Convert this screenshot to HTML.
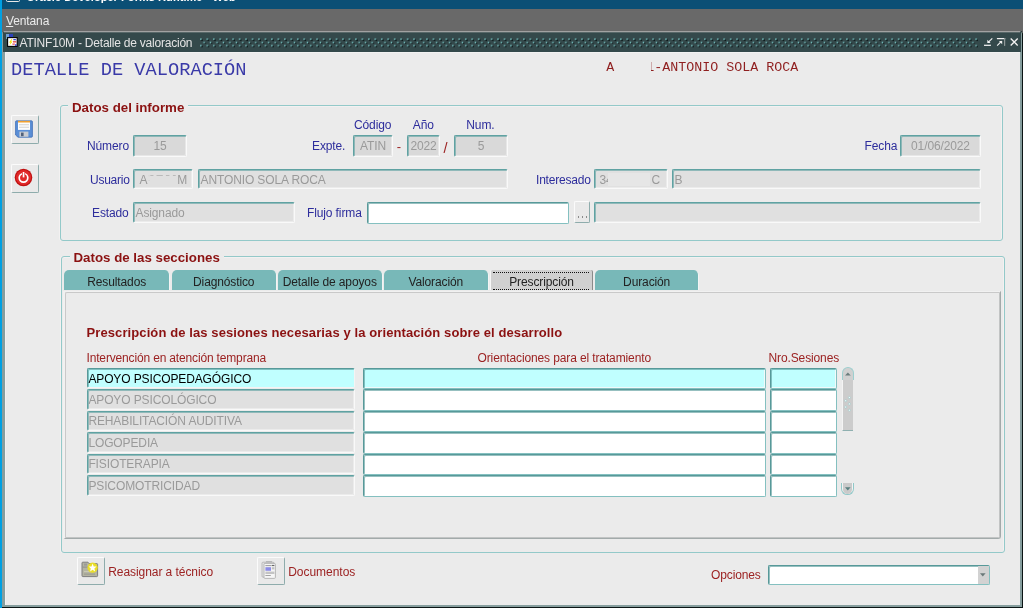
<!DOCTYPE html>
<html><head><meta charset="utf-8">
<style>
*{margin:0;padding:0;box-sizing:border-box}
html,body{width:1023px;height:608px;overflow:hidden;background:#ebebeb}
body{font-family:"Liberation Sans",sans-serif;font-size:12px;position:relative;letter-spacing:-0.12px}
.a{position:absolute;white-space:nowrap}
.f{position:absolute;border:1px solid;border-color:#5fa2a2 #f9f9f9 #f9f9f9 #5fa2a2;border-radius:2px;background:#d9d9d9;color:#9a9a9a;font-size:12px;line-height:20.4px;white-space:nowrap;overflow:hidden;padding:0 0 0 1.5px;box-shadow:inset 1px 1px 0 rgba(95,162,162,.62),inset -1px -1px 0 rgba(249,249,249,.45)}
.f.l{background:#e0e0e0}
.f.c{text-align:center;padding-left:0}
.f.w{background:#fff;color:#000;border-color:#579999 #84c0c0 #84c0c0 #579999;box-shadow:inset 1px 1px 0 rgba(87,153,153,.62)}
.f.cy{background:#c0ffff;color:#000;border-color:#579999 #84c0c0 #84c0c0 #579999;box-shadow:inset 1px 1px 0 rgba(87,153,153,.62),inset -1px -1px 0 #f0fafa}
.f.cy1{background:#c0ffff;color:#000;border-color:#579999 #f4f4f4 #f4f4f4 #579999;box-shadow:inset 1px 1px 0 rgba(87,153,153,.62)}
.f.r2{line-height:20.4px}
.f.r3{line-height:20.4px}
.f.t{line-height:20.4px;padding-left:.4px}
.f.t.u{line-height:18.4px}
.lb{position:absolute;white-space:nowrap;color:#2d2d9c;font-size:12px;line-height:14px}
.lr{position:absolute;white-space:nowrap;color:#9c2222;font-size:12px;line-height:14px}
.gb{position:absolute;border:1px solid #93c9c9;border-radius:3px;box-shadow:inset 0 1px 0 #f3f1f1,inset -1px 0 0 #f3f1f1,-1px 0 0 #f3f1f1}
.gt{position:absolute;white-space:nowrap;color:#8b1111;font-weight:bold;font-size:13.3px;line-height:15px;background:#ebebeb;padding:0 4px;letter-spacing:0}
.tab{position:absolute;top:269.8px;height:20.7px;background:#78b8b8;border-radius:5px 5px 0 0;color:#222;font-size:12px;line-height:25px;text-align:center;white-space:nowrap;border-right:1.5px solid #f4f4f4}
.btn{position:absolute;border-style:solid;border-width:1px 1.2px 1.4px 1px;border-color:#fbfbfb #8eacac #8eacac #fbfbfb;border-radius:2px;background:#e9e9e9}
.btn svg{position:absolute;overflow:visible}
</style></head><body><div id="root" style="position:absolute;left:0;top:0;width:1023px;height:608px;overflow:hidden;will-change:transform">

<!-- outer title strip -->
<div class="a" style="left:0;top:0;width:1023px;height:9px;background:#0b4f75;overflow:hidden">
  <div class="a" style="left:5.6px;top:-8.8px;width:14.4px;height:11px;border:1.5px solid #e8e8e8;border-radius:1.5px"></div>
  <div class="a" style="left:26.5px;top:-9.1px;color:#fff;font-size:11px;font-weight:bold;line-height:13px;letter-spacing:0.06px">Oracle Developer Forms Runtime - Web</div>
</div>
<!-- menu bar -->
<div class="a" style="left:0;top:9px;width:1023px;height:23px;background:#696969"></div>
<div class="a" style="left:6px;top:14px;color:#ececec;font-size:12px;line-height:14px"><u>V</u>entana</div>

<!-- inner window frame -->
<div class="a" style="left:2px;top:31px;width:1021px;height:577px;background:#0a1414;border-radius:3px 3px 0 0"></div>
<div class="a" style="left:2px;top:31px;width:1019.8px;height:575.9px;background:#869e9e;border-radius:3px 3px 0 0"></div>
<div class="a" style="left:4px;top:31px;width:1016px;height:1px;background:#a2a2a2"></div>
<div class="a" style="left:3px;top:32px;width:1018px;height:19.5px;background:#34494b"></div><div class="a" style="left:4px;top:32px;width:1016px;height:1px;background:#586869"></div>
<div class="a" style="left:5px;top:51.5px;width:1014.8px;height:553.8px;background:#f2f2f2"></div>
<div class="a" style="left:6px;top:52.5px;width:1013.8px;height:552px;background:#ebebeb"></div>
<!-- left bright stripe -->
<div class="a" style="left:0;top:0;width:2px;height:608px;background:#00a0e3"></div>

<!-- inner title -->
<svg class="a" style="left:5px;top:33px" width="14" height="15" viewBox="0 0 14 15">
  <rect x="1" y="1" width="7" height="3.5" fill="#2a3fd0" opacity=".85"/><rect x="1" y="1" width="3" height="5" fill="#8fc8d8" opacity=".7"/>
  <rect x="2.6" y="4.6" width="9.6" height="8.8" fill="#fff" stroke="#000" stroke-width="1.1"/>
  <path d="M6.5 6 L4 9.5 L5.6 9.5 L4.4 12.4 L7.6 8.6 L6 8.6 L7.4 6Z" fill="#f2e400"/>
  <rect x="8.3" y="6.2" width="2.6" height="1" fill="#1020d0"/><rect x="8" y="8.3" width="3.2" height="1.1" fill="#e02020"/><rect x="7.4" y="10.6" width="2.4" height="1" fill="#e02020"/><rect x="10" y="11.4" width="1.6" height="1.3" fill="#1020d0"/>
</svg>
<div class="a" style="left:19.5px;top:35.8px;color:#e4e4e4;font-size:12px;line-height:14px;letter-spacing:-0.22px">ATINF10M - Detalle de valoración</div>
<svg class="a" style="left:200px;top:36.5px" width="778" height="11"><defs><pattern id="dp" width="6.461" height="6.6" patternUnits="userSpaceOnUse"><rect x="0.2" y="1.4" width="1.4" height="1.4" fill="#7fd2d2"/><rect x="1.3" y="2.5" width="1.4" height="1.4" fill="#000a0a"/><rect x="3.43" y="4.7" width="1.4" height="1.4" fill="#7fd2d2"/><rect x="4.53" y="5.8" width="1.4" height="1.4" fill="#000a0a"/></pattern></defs><rect width="778" height="10.6" fill="url(#dp)"/></svg>
<!-- window controls -->
<svg class="a" style="left:980px;top:34px" width="42" height="16" viewBox="980 34 42 16" fill="none" stroke="#f2f2f2" stroke-width="1.15">
  <path d="M984 45.3 H990.9" stroke-width="1.25"/><path d="M992.3 38.3 L988.2 42.4"/><path d="M987.3 39.8 V43.1 H990.6Z" fill="#f2f2f2" stroke="none"/>
  <path d="M996.9 38.6 H1005.2" stroke-width="1.25"/><path d="M1004.6 38 V45.9" stroke="#8e9898" stroke-width="1.25"/><path d="M997.2 45.6 L1001.6 41.2"/><path d="M998.9 40.9 H1002.2 V44.2Z" fill="#f2f2f2" stroke="none"/>
  <path d="M1010.7 38.6 L1017.7 45.5 M1017.7 38.6 L1010.7 45.5" stroke-width="1.35"/>
</svg>

<!-- headings -->
<div class="a" id="h1" style="left:11px;top:59px;font-family:'Liberation Mono',monospace;font-size:18.7px;line-height:22px;color:#3a3aa8;letter-spacing:0">DETALLE DE VALORACIÓN</div>
<div class="a" id="h2" style="left:606.3px;top:60px;font-family:'Liberation Mono',monospace;font-size:13.33px;line-height:16px;color:#8f1f1f;white-space:pre;letter-spacing:0">A    1-ANTONIO SOLA ROCA</div>
<div class="a" style="left:640px;top:60px;width:10.9px;height:16px;background:#ebebeb"></div>

<!-- side buttons -->
<div class="btn" style="left:10.5px;top:115px;width:28.5px;height:28.5px">
<svg style="left:3.5px;top:4px" width="18" height="18" viewBox="0 0 18 18">
  <path d="M1.5 0.8 H16.5 Q17.4 0.8 17.4 1.7 V16.3 Q17.4 17.2 16.5 17.2 H3 L0.6 15 V1.7 Q0.6 0.8 1.5 0.8Z" fill="#5b8fd6" stroke="#3f6db5" stroke-width=".8"/>
  <rect x="3" y="0.9" width="12" height="9" fill="#fdfdfd"/><rect x="3" y="0.9" width="12" height="1.6" fill="#f0a030"/>
  <rect x="4" y="4.4" width="10" height=".8" fill="#c8c8c8"/><rect x="4" y="6.8" width="10" height=".8" fill="#c8c8c8"/>
  <rect x="4.4" y="11.6" width="9" height="5.2" fill="#c9ccd2"/><rect x="6" y="12.6" width="2.6" height="3.6" fill="#50607a"/>
</svg></div>
<div class="btn" style="left:10.5px;top:164px;width:28.5px;height:28.5px">
<svg style="left:2.9px;top:2.8px" width="19" height="19" viewBox="0 0 19 19">
  <circle cx="9.5" cy="9.5" r="8.8" fill="#c01010"/><circle cx="9.5" cy="9.5" r="7.6" fill="#e02a2a"/>
  <circle cx="9.5" cy="9.8" r="4.3" fill="none" stroke="#fff" stroke-width="1.7"/>
  <rect x="8" y="3.4" width="3" height="5" fill="#e02a2a"/><rect x="8.7" y="4" width="1.7" height="5.4" fill="#fff"/>
</svg></div>

<!-- group 1 -->
<div class="gb" style="left:60px;top:105px;width:943px;height:136px"></div>
<div class="gt" style="left:68px;top:99.6px">Datos del informe</div>

<div class="lb" style="left:87px;top:139px">Número</div>
<div class="f c" style="left:133px;top:135px;width:54px;height:22px">15</div>
<div class="lb" style="left:354px;top:117.8px">Código</div>
<div class="lb" style="left:412.8px;top:117.8px">Año</div>
<div class="lb" style="left:466.3px;top:117.8px">Num.</div>
<div class="lb" style="left:312px;top:139px">Expte.</div>
<div class="f c" style="left:353px;top:135px;width:40px;height:22px">ATIN</div>
<div class="lr" style="left:396.8px;top:139.6px;font-size:13px">-</div>
<div class="f c" style="left:407px;top:135px;width:33px;height:22px">2022</div>
<div class="lr" style="left:443.6px;top:141.2px;font-size:14.5px">/</div>
<div class="f c" style="left:454px;top:135px;width:54px;height:22px">5</div>
<div class="lb" style="left:864.5px;top:139px">Fecha</div>
<div class="f c" style="left:900px;top:135px;width:81px;height:22px">01/06/2022</div>

<div class="lb" style="left:90px;top:173px;letter-spacing:-0.25px">Usuario</div>
<div class="f l c r2" style="left:133px;top:169px;width:60px;height:20px"><span style="float:left;margin-left:5.6px">A</span><span style="float:right;margin-right:4.8px">M</span></div>
<svg class="a" style="left:148px;top:173px" width="30" height="12"><g fill="#a9a9a9"><rect x="2.3" y="2.2" width="3.1" height=".7"/><rect x="8.5" y="2.2" width="6.3" height=".7"/><rect x="17.9" y="2.2" width="3.5" height=".7"/><rect x="24.9" y="2.2" width="2.8" height=".7"/><rect x="0.7" y="2.4" width=".7" height=".8" fill="#c0c0c0"/><rect x="0.7" y="7" width=".7" height=".8" fill="#c0c0c0"/></g></svg>
<div class="f l r2" style="left:198px;top:169px;width:310px;height:20px">ANTONIO SOLA ROCA</div>
<div class="lb" style="left:536px;top:173px;letter-spacing:-0.2px">Interesado</div>
<div class="f l r2" style="left:594px;top:169px;width:74px;height:20px"><span style="position:absolute;left:4.5px">34</span><span style="position:absolute;left:56.6px">C</span></div>
<div class="a" style="left:608.2px;top:173px;width:41.5px;height:12.6px;background:#e6e6e6"></div>
<div class="f l r2" style="left:672px;top:169px;width:309px;height:20px">B</div>

<div class="lb" style="left:92px;top:206px">Estado</div>
<div class="f l r3" style="left:133px;top:202px;width:162px;height:21px">Asignado</div>
<div class="lb" style="left:307px;top:206px">Flujo firma</div>
<div class="f w" style="left:367px;top:202px;width:202px;height:22px"></div>
<div class="btn" style="left:573.5px;top:200.6px;width:16.8px;height:22px"><i class="a" style="left:3.4px;top:14.8px;width:1.1px;height:1.6px;background:#8a8a8a"></i><i class="a" style="left:7.4px;top:14.8px;width:1.1px;height:1.6px;background:#8a8a8a"></i><i class="a" style="left:11.4px;top:14.8px;width:1.1px;height:1.6px;background:#8a8a8a"></i></div>
<div class="f l r3" style="left:594px;top:202px;width:387px;height:21px"></div>

<!-- group 2 -->
<div class="gb" style="left:61px;top:256px;width:943.5px;height:297px"></div>
<div class="gt" style="left:69.5px;top:250.4px">Datos de las secciones</div>

<!-- tab panel -->
<div class="a" style="left:62.5px;top:290.5px;width:938.3px;height:248.2px;border-style:solid;border-width:1.2px 1.3px 1.3px 2.4px;border-color:#f1f1f1 #a2aaaa #a2aaaa #f1f1f1;border-radius:0 0 3px 0"><div style="width:100%;height:100%;border-style:solid;border-width:1.1px 1.3px 1.3px 1px;border-color:#c9c9c9 #c2c4c4 #c2c4c4 #c9c9c9;border-radius:2px 0 2px 0"></div></div>
<div class="tab" style="left:63.9px;width:106.6px">Resultados</div>
<div class="tab" style="left:172px;width:104.5px">Diagnóstico</div>
<div class="tab" style="left:278px;width:104.5px">Detalle de apoyos</div>
<div class="tab" style="left:384px;width:104.5px">Valoración</div>
<div class="tab" style="left:490px;width:103px;background:#d0d0d0;border-radius:2px 2px 0 0;border-left:1.5px solid #f6f6f6;border-right:1.5px solid #8a8a8a">Prescripción</div>
<div class="a" style="left:493px;top:271.5px;width:96px;height:18.5px;border-top:1px dotted #111;border-bottom:1px dotted #111"></div>
<div class="tab" style="left:595px;width:104.3px">Duración</div>

<div class="a" id="pt" style="left:86.5px;top:324.6px;color:#8b1111;font-weight:bold;font-size:13px;line-height:15px;letter-spacing:0.1px">Prescripción de las sesiones necesarias y la orientación sobre el desarrollo</div>
<div class="lr" style="left:86.5px;top:350.6px;letter-spacing:-0.16px">Intervención en atención temprana</div>
<div class="lr" style="left:477.5px;top:350.6px">Orientaciones para el tratamiento</div>
<div class="lr" style="left:768.5px;top:350.6px">Nro.Sesiones</div>

<div class="f cy1 t" style="left:87px;top:368px;width:268px;height:20px">APOYO PSICOPEDAGÓGICO</div>
<div class="f cy" style="left:363px;top:368px;width:403px;height:21px"></div>
<div class="f cy" style="left:770px;top:368px;width:67px;height:21px"></div>
<div class="f l t" style="left:87px;top:389px;width:268px;height:21px">APOYO PSICOLÓGICO</div>
<div class="f w" style="left:363px;top:389px;width:403px;height:22px"></div>
<div class="f w" style="left:770px;top:389px;width:67px;height:22px"></div>
<div class="f l t u" style="left:87px;top:411px;width:268px;height:20px">REHABILITACIÓN AUDITIVA</div>
<div class="f w" style="left:363px;top:411px;width:403px;height:21px"></div>
<div class="f w" style="left:770px;top:411px;width:67px;height:21px"></div>
<div class="f l t" style="left:87px;top:432px;width:268px;height:21px">LOGOPEDIA</div>
<div class="f w" style="left:363px;top:432px;width:403px;height:22px"></div>
<div class="f w" style="left:770px;top:432px;width:67px;height:22px"></div>
<div class="f l t u" style="left:87px;top:454px;width:268px;height:20px">FISIOTERAPIA</div>
<div class="f w" style="left:363px;top:454px;width:403px;height:21px"></div>
<div class="f w" style="left:770px;top:454px;width:67px;height:21px"></div>
<div class="f l t" style="left:87px;top:475px;width:268px;height:21px">PSICOMOTRICIDAD</div>
<div class="f w" style="left:363px;top:475px;width:403px;height:22px"></div>
<div class="f w" style="left:770px;top:475px;width:67px;height:22px"></div>

<!-- scrollbar -->
<div class="a" style="left:841.5px;top:367.3px;width:12.2px;height:13px;border:1px solid #9ccfcf;border-bottom:none;border-radius:6px 6px 0 0;background:#d0d0d0"></div>
<svg class="a" style="left:844.6px;top:371.6px" width="6" height="4"><path d="M0 3.6 L2.9 0.4 L5.8 3.6Z" fill="#6a7c7c"/></svg>
<div class="a" style="left:842px;top:380px;width:11.4px;height:51px;background:#cccccc;border-left:1px solid #f4f4f4;border-bottom:1.2px solid #8fb0b0"></div>
<svg class="a" style="left:843px;top:395px" width="10" height="18"><g fill="#f6ffff" stroke="#8cc0c0" stroke-width=".5"><circle cx="6.4" cy="2.6" r="1"/><circle cx="2.7" cy="5.7" r="1"/><circle cx="6.4" cy="8.9" r="1"/><circle cx="2.7" cy="12.1" r="1"/><circle cx="6.4" cy="15.2" r="1"/></g></svg>
<div class="a" style="left:841.2px;top:482.6px;width:12.6px;height:12.6px;border:1px solid #8fc8c8;border-top:none;border-radius:0 0 6.3px 6.3px;background:#f4f4f4"></div>
<div class="a" style="left:843px;top:483.2px;width:9.4px;height:10.6px;border-radius:0 0 4.7px 4.7px;background:#cacaca"></div>
<svg class="a" style="left:844.6px;top:486.8px" width="6" height="4"><path d="M0 0.3 L5.6 0.3 L2.8 3.4Z" fill="#5a8080"/></svg>

<!-- bottom -->
<div class="btn" style="left:77px;top:557.2px;width:28px;height:27.6px">
<svg style="left:3.4px;top:2.8px" width="18" height="17" viewBox="0 0 18 17">
  <path d="M1 2 Q1 1.2 1.8 1.2 H7 L8 2.6 H15.8 Q16.6 2.6 16.6 3.4 V14.8 Q16.6 15.6 15.8 15.6 H1.8 Q1 15.6 1 14.8Z" fill="#b4b4a2" stroke="#7e7e7e" stroke-width="1"/>
  <rect x="1.6" y="5.6" width="14.4" height="1" fill="#8e8e8e"/><rect x="3" y="2.6" width="3" height="2" fill="#9a9a9a"/>
  <rect x="3" y="10" width="6" height="1" fill="#c8c8b4"/><rect x="3" y="12.6" width="11" height="1" fill="#989890"/>
  <circle cx="11.6" cy="6.6" r="5.2" fill="#efe21e" opacity=".92"/>
  <path d="M11.6 2.6 L12.7 5.4 L15.6 5.6 L13.4 7.5 L14.1 10.4 L11.6 8.8 L9.1 10.4 L9.8 7.5 L7.6 5.6 L10.5 5.4Z" fill="#fff"/>
</svg></div>
<div class="lr" style="left:108.2px;top:565.2px;letter-spacing:-0.06px">Reasignar a técnico</div>
<div class="btn" style="left:256.5px;top:557.2px;width:28px;height:27.6px">
<svg style="left:3px;top:1.6px" width="17" height="20" viewBox="0 0 17 20">
  <rect x="1" y="2.2" width="12" height="15" rx="1" fill="#e4e4e4" stroke="#b0b0b0" stroke-width=".8"/>
  <rect x="5" y="1" width="6" height="1.4" fill="#b8b8b8"/>
  <rect x="3" y="3.4" width="11.4" height="15" rx="1" fill="#f6f6f6" stroke="#a8a8a8" stroke-width=".8"/>
  <rect x="4.4" y="5.2" width="6" height=".9" fill="#8e8e8e"/><rect x="10.8" y="4.9" width="2.6" height="1.2" fill="#666"/>
  <rect x="4.4" y="7.2" width="5.6" height="3.6" fill="#8c8ce6"/><rect x="10.8" y="7.2" width="2.6" height="2.2" fill="#c0c0c0"/>
  <rect x="4.4" y="11.6" width="9" height="2.4" fill="#c4c4c4"/><rect x="4.4" y="15" width="5.4" height=".9" fill="#9a9a9a"/>
</svg></div>
<div class="lr" style="left:288.2px;top:565.2px;letter-spacing:-0.03px">Documentos</div>
<div class="lr" style="left:711px;top:568.1px">Opciones</div>
<div class="f w" style="left:768px;top:565px;width:222px;height:20px"></div>
<div class="a" style="left:978px;top:566px;width:10.5px;height:17.5px;background:#d2d2d2"></div>
<svg class="a" style="left:980.4px;top:572.6px" width="6" height="4"><path d="M0 0.3 L5.6 0.3 L2.8 3.4Z" fill="#6a7878"/></svg>

</div></body></html>
